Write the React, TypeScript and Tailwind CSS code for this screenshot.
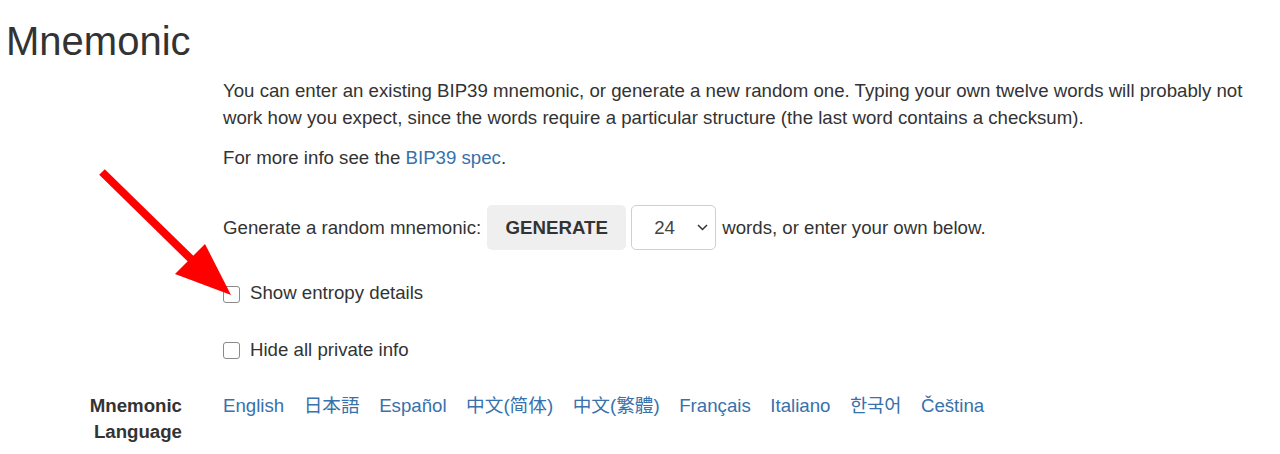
import React from "react";

const link = "text-[#3871ab] no-underline";

function Checkbox({ label }: { label: string }) {
  return (
    <label className="flex items-center h-[26.67px]">
      <span className="w-[17px] h-[17px] border border-[#8a8a8a] rounded-[3px] bg-white shrink-0 mt-[1px]" />
      <span className="ml-[10px]">{label}</span>
    </label>
  );
}

export default function App() {
  return (
    <div
      className="relative w-[1280px] h-[454px] bg-white text-[#333333] overflow-hidden"
      style={{ fontFamily: '"Liberation Sans", Arial, sans-serif' }}
    >
      <h2 className="mt-[19px] pl-[6px] text-[40px] leading-[44px] font-normal">Mnemonic</h2>

      <div className="text-[18.67px] leading-[26.67px]">
        <div className="pl-[223px] pr-[20px]">
          <p className="mt-[15px] mb-[13.33px]">
            You can enter an existing BIP39 mnemonic, or generate a new random one. Typing your own twelve words will
            probably not work how you expect, since the words require a particular structure (the last word contains a
            checksum).
          </p>
          <p className="mb-[13.33px]">
            For more info see the <a className={link} href="#">BIP39 spec</a>.
          </p>

          <div className="mt-[34px] flex items-center h-[45px]">
            <span>Generate a random mnemonic:</span>
            <button className="ml-[6px] w-[139px] h-[45px] rounded-[5px] bg-[#efefef] font-bold text-[#333333] flex items-center justify-center">
              GENERATE
            </button>
            <div className="ml-[5px] w-[85px] h-[45px] rounded-[5px] border border-[#cfcfcf] bg-white flex items-center pl-[22px] pr-[7px]">
              <span className="text-[#444]">24</span>
              <svg className="ml-auto" width="11" height="7" viewBox="0 0 11 7">
                <polyline points="1,1 5.5,5.5 10,1" fill="none" stroke="#333" strokeWidth="1.5" />
              </svg>
            </div>
            <span className="ml-[6px]">words, or enter your own below.</span>
          </div>

          <div className="mt-[30px]">
            <Checkbox label="Show entropy details" />
          </div>
          <div className="mt-[30px]">
            <Checkbox label="Hide all private info" />
          </div>
        </div>

        <div className="mt-[29px] flex">
          <div className="w-[202px] pr-[20px] text-right font-bold">
            Mnemonic
            <br />
            Language
          </div>
          <div className="pl-[21px] flex gap-[19.5px] items-start">
            <a className={link} href="#">English</a>
            <a className={link} href="#" style={{ fontFamily: '"Liberation Sans", "Noto Sans CJK JP", sans-serif' }}>日本語</a>
            <a className={link} href="#">Español</a>
            <a className={link} href="#" style={{ fontFamily: '"Liberation Sans", "Noto Sans CJK SC", sans-serif' }}>中文(简体)</a>
            <a className={link} href="#" style={{ fontFamily: '"Liberation Sans", "Noto Sans CJK TC", sans-serif' }}>中文(繁體)</a>
            <a className={link} href="#">Français</a>
            <a className={link} href="#">Italiano</a>
            <a className={link} href="#" style={{ fontFamily: '"Liberation Sans", "Noto Sans CJK KR", sans-serif' }}>한국어</a>
            <a className={link} href="#">Čeština</a>
          </div>
        </div>
      </div>

      <svg className="absolute left-0 top-0 pointer-events-none" width="1280" height="454" viewBox="0 0 1280 454">
        <line x1="102" y1="172" x2="194" y2="262" stroke="#ff0000" strokeWidth="8" />
        <polygon points="175,274 205,244 231,295" fill="#ff0000" />
      </svg>
    </div>
  );
}
